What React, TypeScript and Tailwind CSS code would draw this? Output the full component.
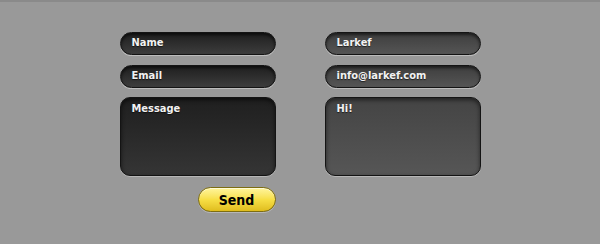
import React from "react";

const font = { fontFamily: '"DejaVu Sans", "Liberation Sans", sans-serif' };

function Pill({ text, light }: { text: string; light?: boolean }) {
  return (
    <div
      className={`h-[23px] w-[156px] rounded-full border border-[#141414] flex items-center pl-[11px] text-[11px] font-bold text-[#f2f2f2] [font-stretch:condensed] [text-shadow:0_1px_1px_rgba(0,0,0,0.6)] ${
        light
          ? "bg-gradient-to-b from-[#3e3e3e] to-[#555555] shadow-[inset_0_2px_3px_rgba(0,0,0,0.55),0_1px_0_rgba(255,255,255,0.35)]"
          : "bg-gradient-to-b from-[#1f1f1f] to-[#3d3d3d] shadow-[inset_0_2px_3px_rgba(0,0,0,0.6),0_1px_0_rgba(255,255,255,0.35)]"
      }`}
    >
      {text}
    </div>
  );
}

function Area({ text, light }: { text: string; light?: boolean }) {
  return (
    <div
      className={`h-[79px] w-[156px] rounded-[10px] border border-[#141414] pl-[11px] pt-[4px] text-[11px] leading-[14px] font-bold text-[#f2f2f2] [font-stretch:condensed] [text-shadow:0_1px_1px_rgba(0,0,0,0.6)] ${
        light
          ? "bg-gradient-to-b from-[#444444] to-[#565656] shadow-[inset_0_2px_4px_rgba(0,0,0,0.55),0_1px_0_rgba(255,255,255,0.3)]"
          : "bg-gradient-to-b from-[#1f1f1f] to-[#353535] shadow-[inset_0_2px_4px_rgba(0,0,0,0.6),0_1px_0_rgba(255,255,255,0.3)]"
      }`}
    >
      {text}
    </div>
  );
}

export default function App() {
  return (
    <div
      className="w-[600px] h-[244px] bg-[#999999] border-t-2 border-[#8a8a8a] flex justify-center pt-[30px] gap-[49px]"
      style={font}
    >
      <div className="flex flex-col w-[156px]">
        <Pill text="Name" />
        <div className="h-[10px]" />
        <Pill text="Email" />
        <div className="h-[9px]" />
        <Area text="Message" />
        <div className="h-[11px]" />
        <div className="flex justify-end">
          <button className="h-[25px] w-[78px] rounded-full border border-[#7d6d12] bg-gradient-to-b from-[#fff59a] via-[#f7df45] to-[#e0bd1c] shadow-[inset_0_1px_0_rgba(255,255,255,0.6),0_1px_0_rgba(255,255,255,0.3)] text-[14px] font-bold text-black [font-stretch:condensed] leading-none flex items-center justify-center">
            Send
          </button>
        </div>
      </div>
      <div className="flex flex-col w-[156px]">
        <Pill text="Larkef" light />
        <div className="h-[10px]" />
        <Pill text="info@larkef.com" light />
        <div className="h-[9px]" />
        <Area text="Hi!" light />
      </div>
    </div>
  );
}
